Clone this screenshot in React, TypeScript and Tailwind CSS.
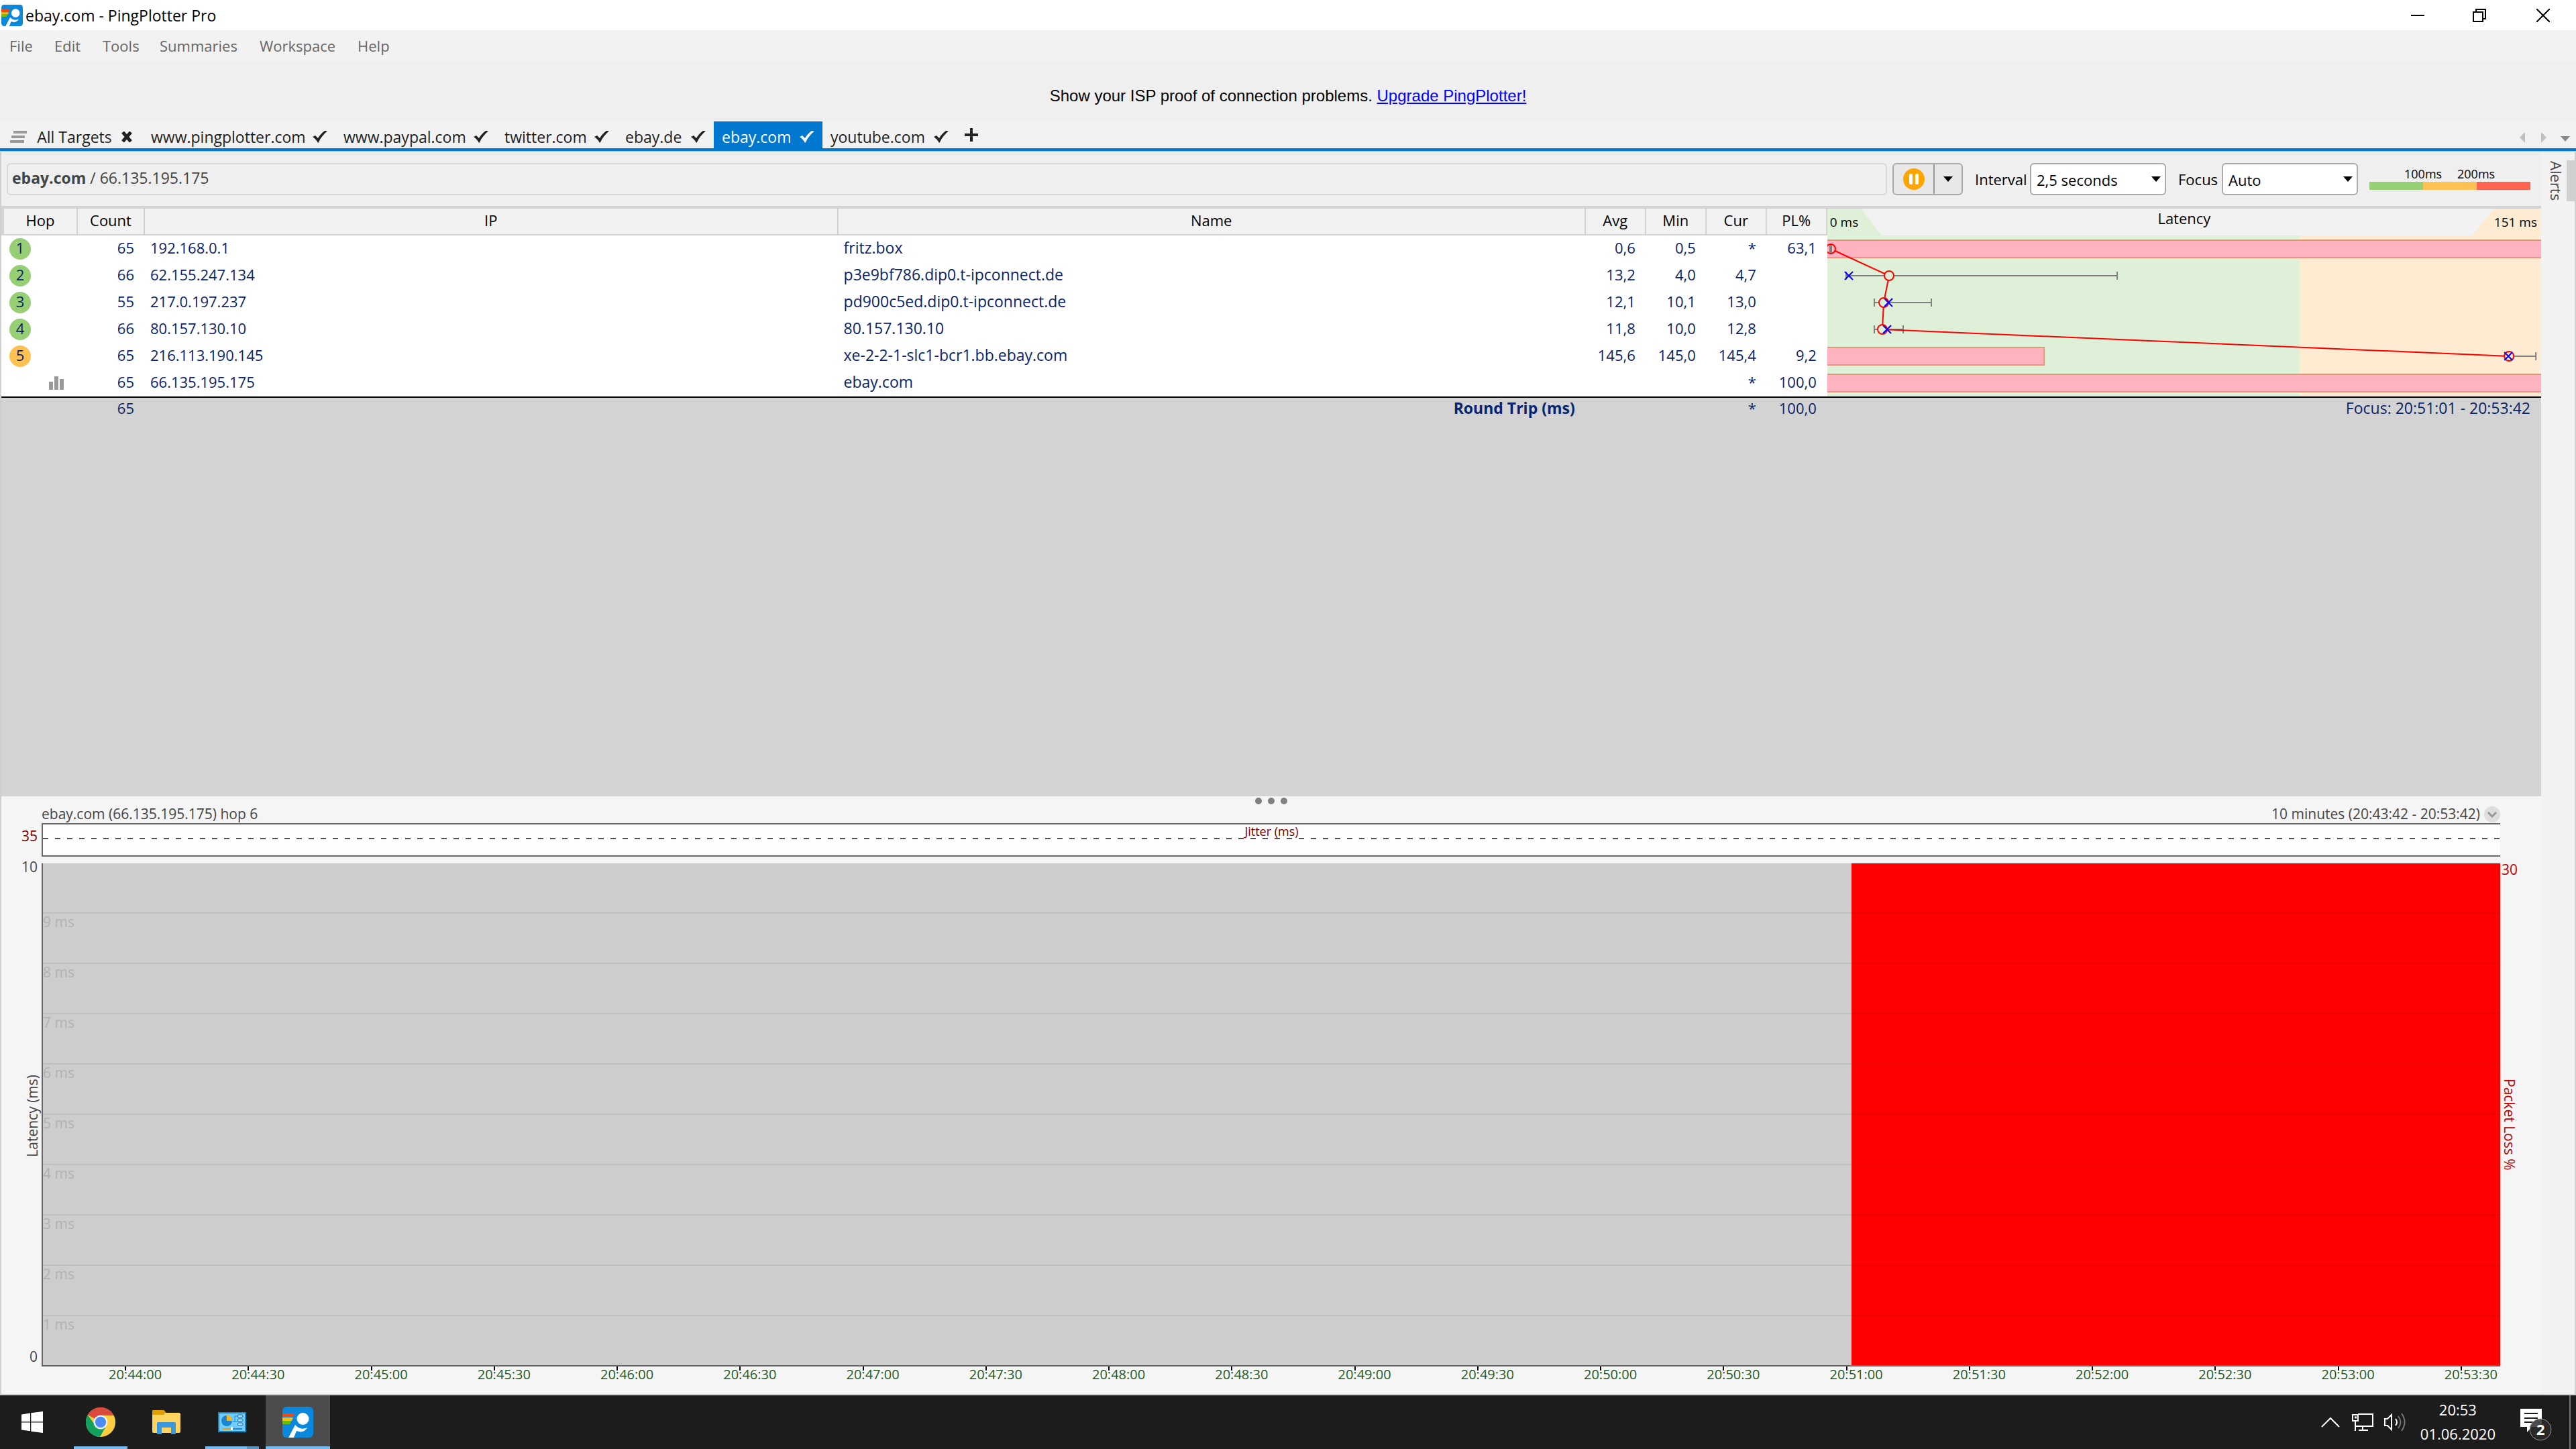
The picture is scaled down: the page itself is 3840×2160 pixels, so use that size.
import React from "react";

type Hop = {
  hop: number;
  count: string;
  ip: string;
  name: string;
  avg: string;
  min: string;
  cur: string;
  loss: string;
  warn?: boolean;
  chart?: boolean;
};

const hops: Hop[] = [
  { hop: 1, count: "65", ip: "192.168.0.1", name: "fritz.box", avg: "0,6", min: "0,5", cur: "*", loss: "63,1" },
  { hop: 2, count: "66", ip: "62.155.247.134", name: "p3e9bf786.dip0.t-ipconnect.de", avg: "13,2", min: "4,0", cur: "4,7", loss: "" },
  { hop: 3, count: "55", ip: "217.0.197.237", name: "pd900c5ed.dip0.t-ipconnect.de", avg: "12,1", min: "10,1", cur: "13,0", loss: "" },
  { hop: 4, count: "66", ip: "80.157.130.10", name: "80.157.130.10", avg: "11,8", min: "10,0", cur: "12,8", loss: "" },
  { hop: 5, count: "65", ip: "216.113.190.145", name: "xe-2-2-1-slc1-bcr1.bb.ebay.com", avg: "145,6", min: "145,0", cur: "145,4", loss: "9,2", warn: true },
  { hop: 6, count: "65", ip: "66.135.195.175", name: "ebay.com", avg: "", min: "", cur: "*", loss: "100,0", chart: true },
];

const tabs = [
  { label: "www.pingplotter.com", cls: "w-[287px]" },
  { label: "www.paypal.com", cls: "w-60" },
  { label: "twitter.com", cls: "w-[180px]" },
  { label: "ebay.de", cls: "w-36" },
  { label: "ebay.com", cls: "w-[162px]", active: true },
  { label: "youtube.com", cls: "w-[200px]" },
];

const times = Array.from({ length: 20 }, (_, i) => {
  const m = 44 + Math.floor(i / 2);
  return `20:${m}:${i % 2 ? "30" : "00"}`;
});

const levels = ["", "9 ms", "8 ms", "7 ms", "6 ms", "5 ms", "4 ms", "3 ms", "2 ms", "1 ms"];

function PingLogo({ className }: { className: string }) {
  return (
    <svg viewBox="0 0 46 46" className={className} aria-hidden="true">
      <rect width="46" height="46" rx="6" fill="#0b88dc" />
      <path d="M0 10h18l-2 5H0z" fill="#ff4500" />
      <path d="M0 16h16l-2 5H0z" fill="#ffb900" />
      <path d="M0 21h13l-2 5H0z" fill="#6bbf00" />
      <circle cx="30.500" cy="18" r="9" fill="#fff" />
      <path d="M19 27c5 6 12 7 18 4-3 6-9 8-16 5l-4 10H9z" fill="#fff" />
    </svg>
  );
}

function Check() {
  return (
    <svg viewBox="0 0 22 18" className="h-[18px] w-[22px] shrink-0" aria-hidden="true">
      <path d="M0 9l4-2 4 4c3-5 6-8 10-11h4C17 5 12 10 9 17l-1 1C6 14 3 11 0 9z" fill="currentColor" />
    </svg>
  );
}

function Caret({ className }: { className: string }) {
  return (
    <svg viewBox="0 0 14 8" className={className} aria-hidden="true">
      <path d="M0 0h14L7 8z" fill="currentColor" />
    </svg>
  );
}

function TitleBar() {
  return (
    <header className="flex h-[45px] shrink-0 items-center bg-white pl-0.5 text-black">
      <PingLogo className="h-8 w-8" />
      <h1 className="ml-1 flex-1 text-[23px]">ebay.com - PingPlotter Pro</h1>
      <button aria-label="Minimize" className="flex h-full w-[92px] items-center justify-center">
        <svg viewBox="0 0 20 20" className="h-5 w-5"><path d="M0 10h20" stroke="#000" strokeWidth="2" /></svg>
      </button>
      <button aria-label="Restore" className="flex h-full w-[92px] items-center justify-center">
        <svg viewBox="0 0 20 20" className="h-5 w-5" fill="none" stroke="#000" strokeWidth="2">
          <path d="M1 5h14v14H1zM5 5V1h14v14h-4" />
        </svg>
      </button>
      <button aria-label="Close" className="flex h-full w-[98px] items-center justify-center">
        <svg viewBox="0 0 20 20" className="h-5 w-5"><path d="M0 0l20 20M20 0L0 20" stroke="#000" strokeWidth="2" /></svg>
      </button>
    </header>
  );
}

function MenuBar() {
  return (
    <nav className="flex h-[46px] shrink-0 items-center bg-[#f2f2f2] pl-3.5 text-[#666]">
      <button className="w-[67px] text-left">File</button>
      <button className="w-[72px] text-left">Edit</button>
      <button className="w-[85px] text-left">Tools</button>
      <button className="w-[149px] text-left">Summaries</button>
      <button className="w-[146px] text-left">Workspace</button>
      <button className="text-left">Help</button>
    </nav>
  );
}

function TabBar() {
  return (
    <nav className="flex h-11 shrink-0 items-stretch border-b-4 border-[#0078d0] bg-[#f2f2f2] text-[23px] text-[#222]">
      <button className="flex w-[213px] items-center justify-between pt-1.5 pr-4 pl-[15px]">
        <svg viewBox="0 0 26 18" className="h-[18px] w-[26px]" stroke="#999" strokeWidth="4">
          <path d="M5 2h20M2 9h20M0 16h21" />
        </svg>
        <span>All Targets</span>
        <svg viewBox="0 0 16 16" className="h-4 w-4" stroke="currentColor" strokeWidth="5">
          <path d="M2 1l12 14M14 1L2 15" />
        </svg>
      </button>
      {tabs.map((t) => (
        <button
          key={t.label}
          className={`flex items-center justify-between px-3 pt-1.5 whitespace-nowrap ${t.cls} ${t.active ? "bg-[#0078d0] text-white" : ""}`}
        >
          <span>{t.label}</span>
          <Check />
        </button>
      ))}
      <button aria-label="Add target" className="flex w-11 items-center justify-center">
        <svg viewBox="0 0 20 20" className="h-5 w-5"><path d="M0 10h20M10 0v20" stroke="#222" strokeWidth="4" /></svg>
      </button>
      <div className="ml-auto flex items-center gap-5 pt-2 pr-2">
        <button aria-label="Scroll left" className="mr-1">
          <svg viewBox="0 0 8 16" className="h-4 w-2"><path d="M8 0v16L0 8z" fill="#bfbfbf" /></svg>
        </button>
        <button aria-label="Scroll right">
          <svg viewBox="0 0 8 16" className="h-4 w-2"><path d="M0 0v16l8-8z" fill="#bfbfbf" /></svg>
        </button>
        <button aria-label="Tab list">
          <Caret className="mt-1 h-2 w-4 text-[#888]" />
        </button>
      </div>
    </nav>
  );
}

function Select({ id, label, labelClass, options }: { id: string; label: string; labelClass: string; options: string[] }) {
  return (
    <div className="flex items-center">
      <label htmlFor={id} className={`text-black ${labelClass}`}>{label}</label>
      <div className="grid h-12 w-[203px] items-center">
        <select
          id={id}
          className="col-start-1 row-start-1 h-12 w-full appearance-none rounded-md border-2 border-[#aaa] bg-white pt-0.5 pl-2 text-black"
        >
          {options.map((o) => (
            <option key={o}>{o}</option>
          ))}
        </select>
        <Caret className="pointer-events-none col-start-1 row-start-1 mr-2 h-2 w-3.5 justify-self-end text-black" />
      </div>
    </div>
  );
}

function Toolbar() {
  return (
    <div className="flex h-20 shrink-0 items-center bg-[#efefef] pr-4 pl-2">
      <div className="flex h-12 flex-1 items-center rounded-md border-2 border-[#d8d8d8] pl-1.5 text-[23px] text-[#444]">
        <p className="pb-1"><b>ebay.com</b> / 66.135.195.175</p>
      </div>
      <div className="ml-2 flex h-12 w-[105px] overflow-hidden rounded-md border-2 border-[#aaa] bg-[#e8e8e8]">
        <button aria-label="Pause" className="flex flex-1 items-center justify-center">
          <svg viewBox="0 0 32 32" className="h-8 w-8">
            <circle cx="16" cy="16" r="16" fill="#ffa500" />
            <rect x="9" y="8" width="5" height="16" rx="2" fill="#fff" />
            <rect x="18" y="8" width="5" height="16" rx="2" fill="#fff" />
          </svg>
        </button>
        <button aria-label="Pause options" className="flex w-[42px] items-center justify-center border-l-2 border-[#999]">
          <Caret className="h-2 w-3.5 text-black" />
        </button>
      </div>
      <div className="ml-[18px] flex gap-[18px]">
        <Select id="interval" label="Interval" labelClass="w-[82px]" options={["2,5 seconds", "5 seconds", "10 seconds"]} />
        <Select id="focus" label="Focus" labelClass="w-[65px]" options={["Auto", "10 minutes", "1 hour"]} />
      </div>
      <div className="ml-[17px] w-60 text-lg leading-6 text-black">
        <div className="flex pl-[52px]">
          <span className="w-[79px]">100ms</span>
          <span>200ms</span>
        </div>
        <div className="mb-1 flex h-3">
          <div className="flex-1 bg-[#97cf74]" />
          <div className="flex-1 bg-[#ffc152]" />
          <div className="flex-1 bg-[#fc6451]" />
        </div>
      </div>
    </div>
  );
}

const points = [
  { x: 5, y: 20 },
  { x: 92, y: 60 },
  { x: 84, y: 100 },
  { x: 82, y: 140 },
  { x: 1016, y: 180 },
];
const ranges = [
  { a: 3, b: 7, y: 20 },
  { a: 28, b: 432, y: 60 },
  { a: 70, b: 155, y: 100 },
  { a: 70, b: 113, y: 140 },
  { a: 1014, b: 1056, y: 180 },
];
const currents = [
  { x: 32, y: 60 },
  { x: 91, y: 100 },
  { x: 89, y: 140 },
  { x: 1015, y: 180 },
];
const losses = [
  { w: 1070, y: 7 },
  { w: 325, y: 167 },
  { w: 1070, y: 207 },
];
const pct = (x: number) => `${(x / 1064) * 100}%`;

function LatencyGraph() {
  return (
    <svg className="block h-60 w-full" aria-label="Latency graph">
      <rect width="100%" height="240" fill="#ffebd1" />
      <rect width="66.100%" height="240" fill="#dff0d8" />
      {losses.map((l) => (
        <rect key={l.y} x="-2" y={l.y} width={pct(l.w)} height="26" fill="#ffb3c0" stroke="#e9967a" strokeWidth="2" />
      ))}
      {ranges.map((r) => (
        <g key={r.y} stroke="#808080" strokeWidth="2">
          <line x1={pct(r.a)} x2={pct(r.b)} y1={r.y} y2={r.y} />
          <line x1={pct(r.a)} x2={pct(r.a)} y1={r.y - 6} y2={r.y + 6} />
          <line x1={pct(r.b)} x2={pct(r.b)} y1={r.y - 6} y2={r.y + 6} />
        </g>
      ))}
      {points.slice(1).map((p, i) => (
        <line key={p.y} x1={pct(points[i].x)} y1={points[i].y} x2={pct(p.x)} y2={p.y} stroke="#f00" strokeWidth="2" />
      ))}
      {points.map((p, i) => (
        <circle
          key={p.y}
          cx={pct(p.x)}
          cy={p.y}
          r="7"
          fill={i === 0 ? "#ffb3c0" : i === 4 ? "#ffebd1" : "#dff0d8"}
          stroke="#f00"
          strokeWidth="2"
        />
      ))}
      <line x1={pct(5)} x2={pct(5)} y1="14" y2="26" stroke="#808080" strokeWidth="4" />
      {currents.map((c) => (
        <svg key={c.y} x={pct(c.x)} y={c.y} overflow="visible">
          <path d="M-6-6L6 6M6-6L-6 6" stroke="#00f" strokeWidth="2" />
        </svg>
      ))}
    </svg>
  );
}

const th = "h-10 border-r-2 border-b-2 border-[#d3d3d3] bg-[#f2f2f2] p-0 pb-1 text-center font-normal text-black";
const num = "p-0 pr-4 pb-1 text-right";
const foot = "border-t-2 border-black p-0 pr-4 pb-1 text-right";

function TraceTable() {
  return (
    <table className="w-full table-fixed border-separate border-spacing-0 border-t-4 border-[#d3d3d3] text-[#0a246a]">
      <colgroup>
        <col className="w-[114px]" />
        <col className="w-[100px]" />
        <col className="w-[27.3%]" />
        <col className="w-[29.43%]" />
        <col className="w-[90px]" />
        <col className="w-[90px]" />
        <col className="w-[90px]" />
        <col className="w-[90px]" />
        <col />
      </colgroup>
      <thead>
        <tr>
          <th className={`${th} border-l-4`}>Hop</th>
          <th className={th}>Count</th>
          <th className={th}>IP</th>
          <th className={th}>Name</th>
          <th className={th}>Avg</th>
          <th className={th}>Min</th>
          <th className={th}>Cur</th>
          <th className={th}>PL%</th>
          <th className="h-10 bg-[#f2f2f2] p-0 font-normal text-black">
            <div className="flex h-10 justify-between">
              <div className="flex w-[102px] items-center bg-[#dff0d8] pl-1 text-[19px] [clip-path:polygon(0_0,50%_0,79%_100%,0_100%)]">0 ms</div>
              <div className="leading-7">Latency</div>
              <div className="flex w-[102px] items-center justify-end bg-[#ffebd1] pr-1.5 text-[19px] [clip-path:polygon(31%_0,100%_0,100%_100%,0_100%)]">151 ms</div>
            </div>
          </th>
        </tr>
      </thead>
      <tbody className="bg-white">
        {hops.map((h, i) => (
          <tr key={h.hop}>
            <td className="h-10 p-0">
              {h.chart ? (
                <svg viewBox="0 0 22 20" className="ml-[71px] h-5 w-[22px]" fill="#999">
                  <path d="M0 8h6v12H0zM8 0h6v20H8zM16 4h6v16h-6z" />
                </svg>
              ) : (
                <span className={`ml-3 flex h-8 w-8 items-center justify-center rounded-full pb-1 ${h.warn ? "bg-[#ffc152]" : "bg-[#97cf74]"}`}>
                  {h.hop}
                </span>
              )}
            </td>
            <td className={num}>{h.count}</td>
            <td className="p-0 pb-1 pl-2">{h.ip}</td>
            <td className="p-0 pb-1 pl-2 text-[23px]">{h.name}</td>
            <td className={num}>{h.avg}</td>
            <td className={num}>{h.min}</td>
            <td className={num}>{h.cur}</td>
            <td className={num}>{h.loss}</td>
            {i === 0 && (
              <td rowSpan={6} className="p-0">
                <LatencyGraph />
              </td>
            )}
          </tr>
        ))}
      </tbody>
      <tfoot>
        <tr>
          <td className={`${foot} h-9`} />
          <td className={foot}>65</td>
          <td className={foot} />
          <td className={`${foot} text-[23px] font-bold`}>Round Trip (ms)</td>
          <td className={foot} />
          <td className={foot} />
          <td className={foot}>*</td>
          <td className={foot}>100,0</td>
          <td className={`${foot} text-[23px]`}>Focus: 20:51:01 - 20:53:42</td>
        </tr>
      </tfoot>
    </table>
  );
}

function TimelinePanel() {
  return (
    <section className="flex flex-[891] flex-col bg-[#f5f5f5] text-[21px] text-[#444]">
      <div className="flex h-3.5 shrink-0 items-center justify-center gap-[9px]">
        <span className="h-2.5 w-2.5 rounded-full bg-[#808080]" />
        <span className="h-2.5 w-2.5 rounded-full bg-[#808080]" />
        <span className="h-2.5 w-2.5 rounded-full bg-[#808080]" />
      </div>
      <div className="flex h-[26px] shrink-0 items-center pr-[61px] pl-[60px] leading-6">
        <h2 className="pb-0.5">ebay.com (66.135.195.175) hop 6</h2>
        <p className="ml-auto pb-0.5">10 minutes (20:43:42 - 20:53:42)</p>
        <button aria-label="Time range" className="ml-1.5 flex h-6 w-6 items-center justify-center rounded-full bg-[#dedede]">
          <svg viewBox="0 0 14 9" className="h-[9px] w-3.5" fill="none" stroke="#999" strokeWidth="3"><path d="M1 1l6 6 6-6" /></svg>
        </button>
      </div>
      <div className="flex h-[50px] shrink-0">
        <span className="w-[60px] pt-1 pr-1.5 text-right text-[#800000]">35</span>
        <div className="relative flex flex-1 flex-col items-center border-y-2 border-l-2 border-[#666] bg-[#fdfdfd]">
          <span className="text-lg leading-5 text-[#800000]">Jitter (ms)</span>
          <svg className="absolute inset-x-0 top-5 h-0.5 w-full">
            <path d="M0 1h9000" stroke="#505050" strokeWidth="2" strokeDasharray="8 10" />
          </svg>
        </div>
        <span className="w-[61px]" />
      </div>
      <div className="mt-2.5 flex flex-1">
        <div className="flex w-[60px] flex-col items-end justify-between pr-1.5">
          <span className="-mt-2.5">10</span>
          <span className="rotate-180 pb-3 leading-4 [writing-mode:vertical-rl]">Latency (ms)</span>
          <span>0</span>
        </div>
        <div className="flex flex-1 border-b-2 border-l-2 border-[#666] bg-[#cdcdcd]">
          <div className="flex w-[73.6%] flex-col">
            {levels.map((l) => (
              <div key={l} className={`flex-1 leading-6 text-[#b3b3b3] ${l ? "border-t-2 border-[#bfbfbf]" : ""}`}>{l}</div>
            ))}
          </div>
          <div className="flex flex-1 flex-col bg-[#f00]">
            {levels.map((l) => (
              <div key={l} className={`flex-1 ${l ? "border-t-2 border-[#ee0000]" : ""}`} />
            ))}
          </div>
        </div>
        <div className="flex w-[61px] flex-col items-start justify-between pl-0.5 text-[#c00000]">
          <span className="-mt-1.5">30</span>
          <span className="pt-7 leading-6 [writing-mode:vertical-rl]">Packet Loss %</span>
          <span className="h-6" />
        </div>
      </div>
      <div className="h-[41px] shrink-0 pr-[61px] pl-[60px]">
        <div className="grid translate-x-[100px] grid-cols-20 text-[20px] leading-6">
          {times.map((t) => (
            <div key={t} className="text-[#1f5a1f]">
              <div className="-mb-1.5 ml-6 h-1.5 w-0.5 bg-black" />
              <div>{t}</div>
            </div>
          ))}
        </div>
      </div>
    </section>
  );
}

function Chrome() {
  return (
    <svg viewBox="0 0 48 48" className="h-[46px] w-[46px]" aria-hidden="true">
      <circle cx="24" cy="24" r="23" fill="#ffcd40" />
      <path d="M24 24L4 12.500A23 23 0 0 1 44.500 13.500H24z" fill="#db4a3f" />
      <path d="M4 12.500A23 23 0 0 0 23 47l10-17.500L14.900 28z" fill="#12a05c" />
      <circle cx="24" cy="24" r="11" fill="#f2f2f2" />
      <circle cx="24" cy="24" r="8.500" fill="#4b8bf5" />
    </svg>
  );
}

function Taskbar() {
  return (
    <footer className="flex h-20 shrink-0 items-stretch bg-[#1c1c1d] text-white">
      <button aria-label="Start" className="mr-1.5 flex w-24 items-center justify-center">
        <svg viewBox="0 0 32 32" className="h-8 w-8" fill="#fff">
          <path d="M0 4.500L13 2.500v12.800H0zM14.300 2.300L32 0v15.300H14.300zM0 16.500h13v12.800L0 27.500zM14.300 16.500H32V32l-17.700-2.300z" />
        </svg>
      </button>
      <div className="flex gap-0.5">
        <button aria-label="Chrome" className="flex w-24 flex-col items-center justify-between">
          <span className="flex flex-1 items-center pt-1"><Chrome /></span>
          <span className="h-1 w-20 bg-[#76b9ed]" />
        </button>
        <button aria-label="File Explorer" className="flex w-24 items-center justify-center">
          <svg viewBox="0 0 42 36" className="h-9 w-[42px]">
            <path d="M0 2q0-2 2-2h15l3 4h20q2 0 2 2v26q0 2-2 2H2q-2 0-2-2z" fill="#ffd461" />
            <path d="M0 7V2q0-2 2-2h15l3 3-3 4z" fill="#e0a000" />
            <path d="M7 36V20q0-2 2-2h24q2 0 2 2v16h-7V26H14v10z" fill="#3a96dd" />
          </svg>
        </button>
        <button aria-label="System settings" className="flex w-24 flex-col items-center justify-between">
          <span className="flex flex-1 items-center pt-1">
            <svg viewBox="0 0 42 30" className="h-[30px] w-[42px]">
              <rect x="1" y="1" width="40" height="28" fill="#72cdfb" stroke="#1683bb" strokeWidth="2" />
              <circle cx="13" cy="13" r="8" fill="#1b86cf" />
              <path d="M13 13V4a9 9 0 0 1 8 9z" fill="#ffb31a" />
              <path d="M22 14h3V6h4M25 14h4" fill="none" stroke="#1b86cf" />
              <g fill="#a9e0fb" stroke="#1769a5">
                <rect x="29" y="4" width="8" height="4" rx="2" />
                <rect x="29" y="10" width="8" height="4" rx="2" />
                <rect x="29" y="16" width="8" height="4" rx="2" />
              </g>
              <path d="M6 25h14" stroke="#f59b00" strokeWidth="2" />
              <path d="M22 25h14" stroke="#1b86cf" strokeWidth="2" />
              <rect x="19" y="22" width="3" height="5" fill="#fff" />
            </svg>
          </span>
          <span className="flex h-1 w-20"><span className="w-[62px] bg-[#76b9ed]" /><span className="flex-1 bg-[#5b93bd]" /></span>
        </button>
        <button aria-label="PingPlotter" className="flex w-24 flex-col items-center justify-between bg-[#4c4c4c]">
          <span className="flex flex-1 items-center pt-1"><PingLogo className="h-[46px] w-[46px]" /></span>
          <span className="h-1 w-full bg-[#76b9ed]" />
        </button>
      </div>
      <div className="ml-auto flex items-center">
        <button aria-label="Show hidden icons" className="mr-[18px]">
          <svg viewBox="0 0 28 16" className="h-4 w-7" fill="none" stroke="#fff" strokeWidth="2"><path d="M1 15L14 2l13 13" /></svg>
        </button>
        <button aria-label="Network" className="mr-4">
          <svg viewBox="0 0 32 28" className="h-7 w-8" fill="none" stroke="#fff" strokeWidth="2">
            <path d="M9 2h22v18H5M1 3h8v9H1zM5 12v15M16 20v6M10 26h14" />
            <path d="M4 7h3" strokeWidth="3" />
          </svg>
        </button>
        <button aria-label="Volume" className="mr-[22px]">
          <svg viewBox="0 0 32 28" className="h-7 w-8" fill="none" stroke="#fff" strokeWidth="2">
            <path d="M1 9h4l6-6v22l-6-6H1z" />
            <path d="M17 9q4 5 0 10" />
            <path d="M21 5q7 9 0 18M26 1q9 13 0 26" stroke="#777" />
          </svg>
        </button>
        <time className="mr-[37px] pb-0.5 text-center leading-9">
          20:53
          <br />
          01.06.2020
        </time>
        <button aria-label="Notifications" className="relative mt-2 mr-[25px] h-12 w-12">
          <svg viewBox="0 0 48 48" className="h-12 w-12">
            <path d="M0 0h32v27H17l-7 8v-8H0z" fill="#fff" />
            <path d="M6 7h20M6 14h20M6 20h13" stroke="#1c1c1d" strokeWidth="2" />
            <circle cx="30" cy="31" r="16" fill="#2b2b2b" fillOpacity=".85" stroke="#999" strokeWidth="1" />
          </svg>
          <span className="absolute top-[18px] left-6 font-bold leading-6">2</span>
        </button>
        <div className="mr-2 h-20 w-0.5 bg-[#777]" />
      </div>
    </footer>
  );
}

export default function App() {
  return (
    <div className="flex h-screen flex-col overflow-hidden bg-[#f2f2f2] font-['Open_Sans','Noto_Sans',sans-serif] text-[22px] leading-[30px]">
      <TitleBar />
      <MenuBar />
      <p className="flex h-[90px] shrink-0 items-center justify-center bg-[#efefef] pt-3.5 font-['Liberation_Sans',Arial,sans-serif] text-2xl text-black">
        <span>
          Show your ISP proof of connection problems.{" "}
          <a href="#upgrade" className="text-[#0000ff] underline">Upgrade PingPlotter!</a>
        </span>
      </p>
      <TabBar />
      <main className="flex min-h-0 flex-1 border-2 border-[#d0d0d0]">
        <div className="flex min-w-0 flex-1 flex-col">
          <section className="flex flex-[960] flex-col bg-[#d3d3d3]">
            <Toolbar />
            <TraceTable />
          </section>
          <TimelinePanel />
        </div>
        <aside className="flex w-[50px] shrink-0 items-start justify-between bg-[#f2f2f2] pt-3 pl-2">
          <button className="h-[61px] text-[#444] [writing-mode:vertical-rl]">Alerts</button>
          <div className="h-[61px] w-3 bg-[#d0d0d0]" />
        </aside>
      </main>
      <Taskbar />
    </div>
  );
}
